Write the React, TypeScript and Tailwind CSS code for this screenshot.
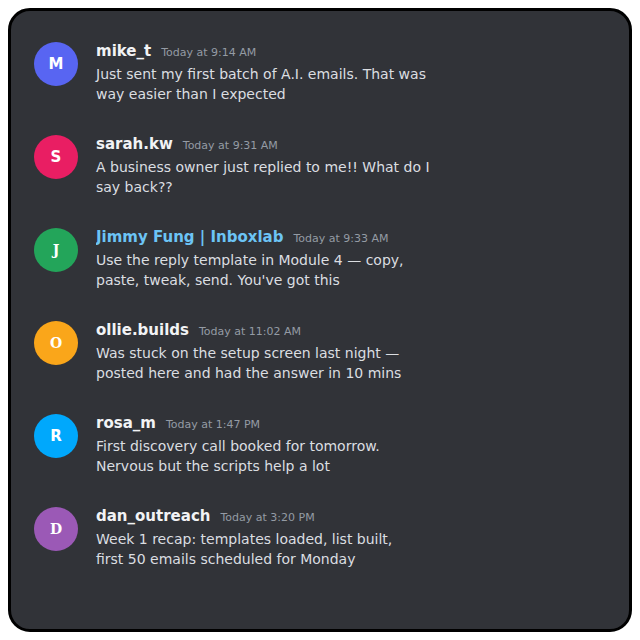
const messages = [
  {
    name: 'mike_t',
    initial: 'M',
    avatar: 'bg-[#5865f2]',
    serif: false,
    time: 'Today at 9:14 AM',
    lines: ['Just sent my first batch of A.I. emails. That was', 'way easier than I expected'],
  },
  {
    name: 'sarah.kw',
    initial: 'S',
    avatar: 'bg-[#e91e63]',
    serif: false,
    time: 'Today at 9:31 AM',
    lines: ['A business owner just replied to me!! What do I', 'say back??'],
  },
  {
    name: 'Jimmy Fung | Inboxlab',
    initial: 'J',
    avatar: 'bg-[#23a55a]',
    serif: true,
    highlight: true,
    time: 'Today at 9:33 AM',
    lines: ['Use the reply template in Module 4 \u2014 copy,', "paste, tweak, send. You've got this"],
  },
  {
    name: 'ollie.builds',
    initial: 'O',
    avatar: 'bg-[#faa61a]',
    serif: true,
    time: 'Today at 11:02 AM',
    lines: ['Was stuck on the setup screen last night \u2014', 'posted here and had the answer in 10 mins'],
  },
  {
    name: 'rosa_m',
    initial: 'R',
    avatar: 'bg-[#00a8fc]',
    serif: false,
    time: 'Today at 1:47 PM',
    lines: ['First discovery call booked for tomorrow.', 'Nervous but the scripts help a lot'],
  },
  {
    name: 'dan_outreach',
    initial: 'D',
    avatar: 'bg-[#9b59b6]',
    serif: true,
    time: 'Today at 3:20 PM',
    lines: ['Week 1 recap: templates loaded, list built,', 'first 50 emails scheduled for Monday'],
  },
];

export default function App() {
  return (
    <div className="w-[640px] h-[640px] bg-white p-2 font-['DejaVu_Sans',sans-serif]">
      <div className="h-full rounded-[22px] border-[3px] border-black bg-[#313338] pl-[23px] pt-[29px] flex flex-col gap-[29px]">
        {messages.map((m) => (
          <div key={m.name} className="flex items-start gap-[18px]">
            {/* Avatar */}
            <div
              className={`mt-[2px] w-[44px] h-[44px] rounded-full flex items-center justify-center text-white font-bold shrink-0 ${m.avatar} ${
                m.serif ? "font-['DejaVu_Serif',serif] text-[14px]" : 'text-[15px]'
              }`}
            >
              {m.initial}
            </div>

            {/* Message body */}
            <div className="flex flex-col">
              <div className="flex items-baseline h-[22px] overflow-hidden">
                <span
                  className={`text-[15px] leading-[22px] font-bold ${m.highlight ? 'text-[#6cc4f5]' : 'text-[#f2f3f5]'}`}
                >
                  {m.name}
                </span>
                <span className="ml-[10px] text-[11px] leading-[22px] text-[#949ba4]">{m.time}</span>
              </div>
              <div className="mt-[2px] text-[14px] leading-[20px] text-[#dbdee1]">
                {m.lines.map((l) => (
                  <div key={l}>{l}</div>
                ))}
              </div>
            </div>
          </div>
        ))}
      </div>
    </div>
  );
}
